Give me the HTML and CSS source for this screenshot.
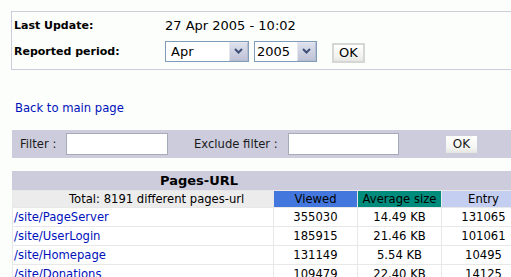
FILE: index.html
```html
<!DOCTYPE html>
<html>
<head>
<meta charset="utf-8">
<link rel="stylesheet" href="styles.css">
</head>
<body>
<div class="page">
  <div class="infobox">
    <div class="lbl">Last Update:</div>
    <div class="val">27 Apr 2005 - 10:02</div>
    <div class="lbl">Reported period:</div>
    <div class="controls">
      <div class="select sel-month">
        <span class="sel-text">Apr</span>
        <span class="sel-btn"><svg width="9" height="6" viewBox="0 0 9 6"><path d="M1 1 L4.5 4.5 L8 1" fill="none" stroke="#3d4f78" stroke-width="2"/></svg></span>
      </div>
      <div class="select sel-year">
        <span class="sel-text">2005</span>
        <span class="sel-btn"><svg width="9" height="6" viewBox="0 0 9 6"><path d="M1 1 L4.5 4.5 L8 1" fill="none" stroke="#3d4f78" stroke-width="2"/></svg></span>
      </div>
      <div class="btn btn-ok1">OK</div>
    </div>
  </div>

  <a class="back" href="#">Back to main page</a>

  <div class="filterbar">
    <span class="flabel f1">Filter :</span>
    <span class="finput in1"></span>
    <span class="flabel f2">Exclude filter :</span>
    <span class="finput in2"></span>
    <span class="btn btn-ok2">OK</span>
  </div>

  <div class="datatable">
    <div class="title">Pages-URL</div>
    <div class="grid">
      <div class="c total">Total: 8191 different pages-url</div>
      <div class="c h viewed">Viewed</div>
      <div class="c h avg">Average size</div>
      <div class="c h entry">Entry</div>

      <div class="c url"><a href="#">/site/PageServer</a></div>
      <div class="c num">355030</div>
      <div class="c num">14.49 KB</div>
      <div class="c num">131065</div>

      <div class="c url"><a href="#">/site/UserLogin</a></div>
      <div class="c num">185915</div>
      <div class="c num">21.46 KB</div>
      <div class="c num">101061</div>

      <div class="c url"><a href="#">/site/Homepage</a></div>
      <div class="c num">131149</div>
      <div class="c num">5.54 KB</div>
      <div class="c num">10495</div>

      <div class="c url"><a href="#">/site/Donations</a></div>
      <div class="c num">109479</div>
      <div class="c num">22.40 KB</div>
      <div class="c num">14125</div>
    </div>
  </div>
</div>
</body>
</html>
```

FILE: styles.css
```css
html, body {
  margin: 0;
  padding: 0;
  overflow: hidden;
  background: #fcfefc;
}
body {
  font-family: Verdana, "DejaVu Sans", sans-serif;
  font-size: 11.6px;
  color: #000;
  width: 511px;
  height: 277px;
}
.page {
  padding: 11px 0 0 11px;
  width: 600px;
}
.infobox {
  width: 560px;
  border: 1px solid #ccccdd;
  display: grid;
  grid-template-columns: 151px 1fr;
  grid-template-rows: 27px 25px;
  padding: 0 0 5px 2px;
  align-items: center;
}
.lbl {
  font-weight: bold;
  font-size: 11px;
}
.val {
  font-size: 13px;
}
.controls {
  display: flex;
  align-items: center;
  padding-top: 1px;
}
.select {
  box-sizing: border-box;
  height: 21px;
  border: 1px solid #7f9db9;
  background: #fff;
  display: flex;
  align-items: center;
  justify-content: space-between;
  font-size: 13px;
  margin-top: -2px;
}
.sel-month { width: 84px; }
.sel-year { width: 63px; margin-left: 5px; }
.sel-text { padding-left: 5px; }
.sel-year .sel-text { padding-left: 2px; }
.sel-btn {
  box-sizing: border-box;
  width: 19px;
  height: 19px;
  background: linear-gradient(#dde0ec, #bfc3d7);
  border: 1px solid #e6e8f0;
  border-right-color: #b8bcd0;
  border-bottom-color: #b8bcd0;
  display: flex;
  align-items: center;
  justify-content: center;
}
.btn {
  box-sizing: border-box;
  display: flex;
  align-items: center;
  justify-content: center;
}
.btn-ok1 {
  width: 33px;
  height: 20px;
  margin-left: 15px;
  border: 2px solid #d6d6d6;
  background: linear-gradient(#ffffff, #f2f2f0 70%, #e6e6e2);
  font-size: 13px;
  margin-top: 1px;
}
.back {
  display: block;
  margin: 31px 0 0 4px;
  line-height: 14px;
  color: #0011bb;
  text-decoration: none;
  width: max-content;
}
.filterbar {
  margin: 15px 0 0 1px;
  width: 560px;
  height: 28px;
  background: #ccccdd;
  display: flex;
  align-items: center;
  color: #1a1a1a;
}
.flabel { white-space: nowrap; }
.f1 { margin-left: 8px; width: 46px; }
.finput {
  box-sizing: border-box;
  height: 22px;
  border: 1px solid #a3abb9;
  background: #fff;
}
.in1 { width: 102px; }
.f2 { margin-left: 26px; width: 94px; }
.in2 { width: 111px; }
.btn-ok2 {
  width: 31px;
  height: 17px;
  margin-left: 47px;
  background: linear-gradient(#ffffff, #f4f4f2 70%, #e4e4e0);
  font-size: 12px;
}
.datatable {
  margin: 13px 0 0 1px;
  width: 560px;
}
.title {
  height: 19px;
  background: #ccccdd;
  font-size: 13px;
  font-weight: bold;
  line-height: 19px;
  padding-left: 148px;
}
.grid {
  display: grid;
  grid-template-columns: 260px 83px 83px 83px;
  grid-auto-rows: 18px;
  grid-template-rows: 16px;
  gap: 1px;
  background: #e8e8e8;
  padding: 1px 0 0 1px;
  width: max-content;
}
.c {
  background: #fff;
  display: flex;
  align-items: center;
  white-space: nowrap;
}
.total {
  background: #ececec;
  padding-left: 56px;
}
.h { justify-content: center; }
.viewed { background: #4477dd; }
.avg { background: #008c7c; }
.entry { background: #c4cef0; }
.url { padding-left: 1px; }
.url a { color: #0011bb; text-decoration: none; }
.num { justify-content: center; }
```
